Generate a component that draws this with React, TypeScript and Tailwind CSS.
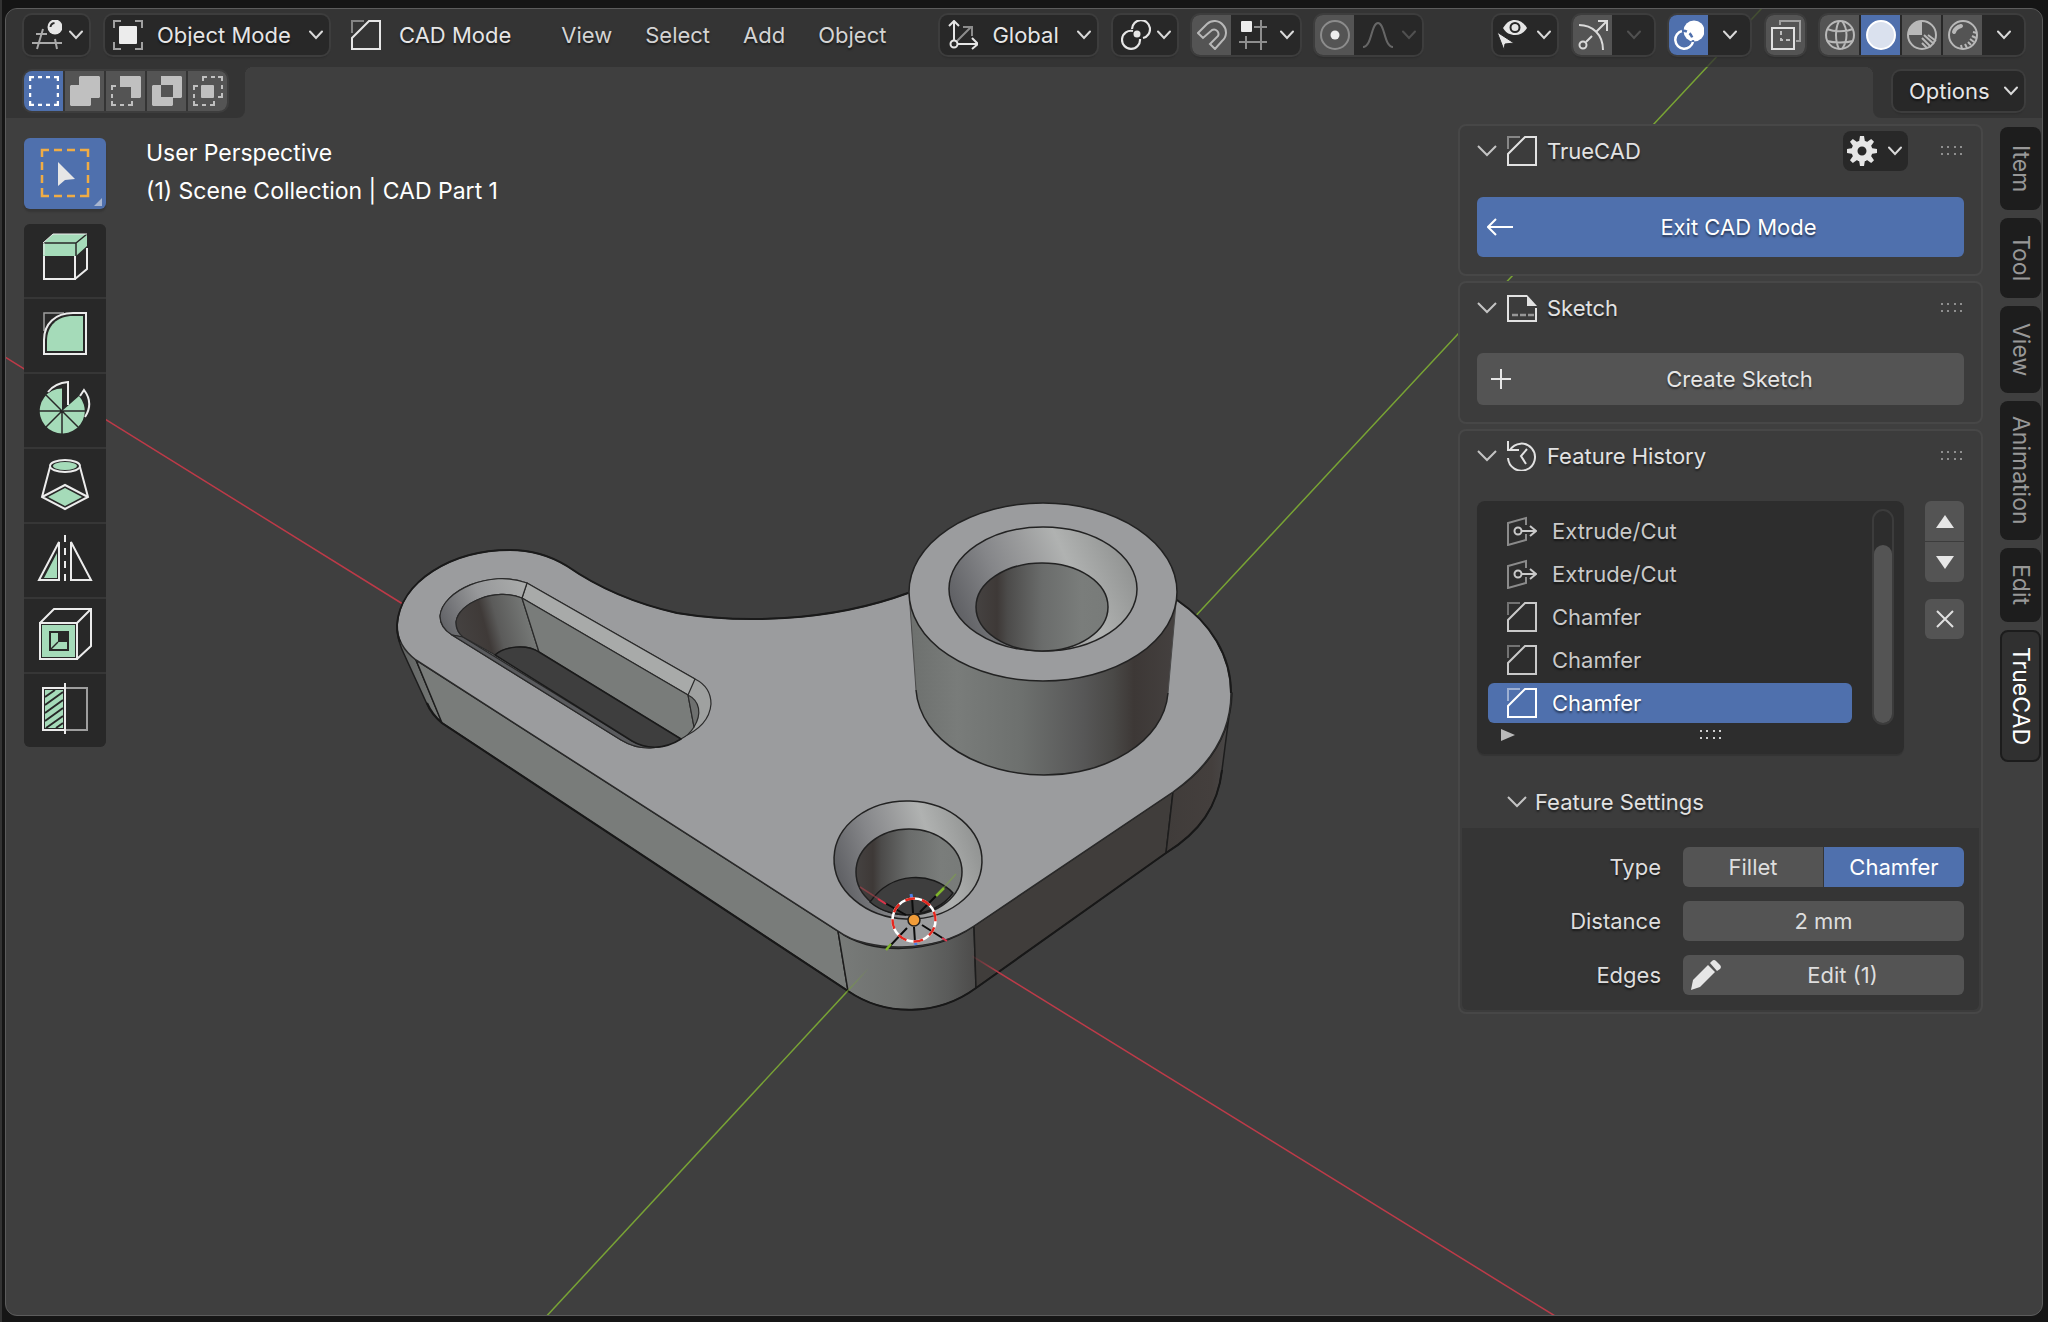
import React, { useState } from 'react';
import clsx from 'clsx';

// --- SHARED ---
const shadow = '[text-shadow:0_2px_2px_rgba(0,0,0,0.5)]';
const MINT = '#a5dbb9';

interface IconProps {
  children: React.ReactNode;
  className?: string;
  box?: number;
}

function Icon({ children, className = 'size-[30px]', box = 30 }: IconProps) {
  return (
    <svg
      viewBox={`0 0 ${box} ${box}`}
      className={clsx('shrink-0', className)}
      fill="none"
      stroke="currentColor"
      strokeWidth="2"
      aria-hidden="true"
    >
      {children}
    </svg>
  );
}

function Chevron({ className = 'text-[#d9d9d9]' }: { className?: string }) {
  return (
    <svg viewBox="0 0 14 10" className={clsx('h-[10px] w-[14px] shrink-0', className)} fill="none" stroke="currentColor" strokeWidth="2" strokeLinecap="round" aria-hidden="true">
      <path d="M1 1.5 7 8l6-6.5" />
    </svg>
  );
}

function PanelChevron() {
  return (
    <svg viewBox="0 0 20 12" className="h-3 w-5 shrink-0 text-[#c4c4c4]" fill="none" stroke="currentColor" strokeWidth="2" aria-hidden="true">
      <path d="m1 1 9 9 9-9" />
    </svg>
  );
}

function Grip({ className = 'text-[#8f8f8f]' }: { className?: string }) {
  return (
    <svg viewBox="0 0 24 10" className={clsx('h-[10px] w-6', className)} fill="currentColor" aria-hidden="true">
      {[1, 7, 14, 20].map((x) => (
        <g key={x}>
          <rect x={x} y="0" width="2" height="2" />
          <rect x={x} y="7" width="2" height="2" />
        </g>
      ))}
    </svg>
  );
}

// --- ICONS ---
function ChamferIcon() {
  return (
    <Icon>
      <path d="M1 29V18L18 1h11v28Z" />
      <path d="M1 13V1h12" opacity=".45" />
    </Icon>
  );
}

function ExtrudeIcon() {
  return (
    <Icon>
      <path d="M19 9V2L1 7v22l18-5v-6" opacity=".6" />
      <circle cx="11" cy="15" r="3.5" />
      <path d="M15 15h13M23 10l6 5-6 5" />
    </Icon>
  );
}

function EditorTypeIcon() {
  return (
    <Icon>
      <path d="M11 9 5 29M4 14h11M0 23h30M23 19l2 10" stroke="#aaa" />
      <circle cx="23" cy="7" r="7.5" fill="#e6e6e6" stroke="none" />
      <path d="M18.500 7a4.500 4.500 0 0 1 4-4" stroke="#2b2b2b" />
    </Icon>
  );
}

function ObjectModeIcon() {
  return (
    <Icon>
      <path d="M1 8V1h7M22 1h7v7M29 22v7h-7M8 29H1v-7" stroke="#a0a0a0" />
      <rect x="6" y="6" width="18" height="18" rx="1" fill="#ececec" stroke="none" />
    </Icon>
  );
}

function OrientationIcon() {
  return (
    <Icon>
      <path d="M8 22 23 7M15 7h9v9" stroke="#8c8c8c" />
      <path d="M6 20V2M1 6l5-5 5 5M9 24h20M24 18l6 6-6 5" />
      <circle cx="6" cy="24" r="3.500" />
    </Icon>
  );
}

function PivotIcon() {
  return (
    <Icon>
      <circle cx="16" cy="14" r="3.500" fill="currentColor" stroke="none" />
      <path d="M11 9a9 9 0 1 1 11 9M12 11a9 9 0 1 0 7 8" strokeWidth="2.200" />
    </Icon>
  );
}

function MagnetIcon() {
  return (
    <Icon>
      <path d="m1 13 9-9a11 11 0 0 1 16 1 11 11 0 0 1-1 16l-7 8-5-5 8-8a4.500 4.500 0 0 0-6-6l-9 8Z" />
    </Icon>
  );
}

function SnapGridIcon() {
  return (
    <Icon>
      <path d="M23 0v30M8 16v13M1 22h28M16 7h13" stroke="#8e8e8e" />
      <rect x="3" y="1" width="11" height="11" rx="1" fill="#ececec" stroke="none" />
    </Icon>
  );
}

function VisibilityIcon() {
  return (
    <Icon>
      <path d="M6 8C10 2 13 0 18 0s9 3 12 8c-3 5-7 7-12 7S9 13 6 8Z" fill="#e6e6e6" stroke="none" />
      <circle cx="18" cy="7.500" r="4.500" fill="#e6e6e6" stroke="#282828" />
      <path d="m0 12 17 11-9 1-1 6Z" fill="#e6e6e6" stroke="#282828" strokeWidth="1" />
    </Icon>
  );
}

function GizmoIcon() {
  return (
    <Icon>
      <path d="M1 5c13 0 24 9 24 25" />
      <circle cx="5" cy="25" r="3.500" />
      <path d="m8 22 6-6M18 12 29 1M20 1h9v10" />
    </Icon>
  );
}

function OverlayIcon() {
  return (
    <Icon>
      <circle cx="20" cy="11" r="10.500" fill="#fff" stroke="none" />
      <path d="M8 11a9 9 0 1 0 11 11" stroke="#fff" strokeWidth="2.500" />
      <path d="M8 11c5-1 11 3 11 11" stroke="#4f70ad" strokeWidth="2.500" strokeDasharray="5 3" />
    </Icon>
  );
}

function XrayIcon() {
  return (
    <Icon>
      <path d="M9 5V1h20v20h-4" stroke="#9f9f9f" />
      <path d="M1 8h22v21H1Z" />
      <path d="M10 11v9h9" stroke="#bdbdbd" strokeDasharray="4 3" />
    </Icon>
  );
}

function WireIcon() {
  return (
    <Icon>
      <circle cx="15" cy="15" r="14" />
      <path d="M2 9c7 3 19 3 26 0M2 21c7 2 19 2 26 0M14 1c-4 8-4 20 0 28M17 1c6 8 6 20 0 28" />
    </Icon>
  );
}

function SolidIcon() {
  return (
    <Icon>
      <circle cx="15" cy="15" r="14" fill="#dae1ee" stroke="#fff" />
    </Icon>
  );
}

function MaterialIcon() {
  return (
    <Icon>
      <path d="M15 15V1A14 14 0 0 0 1 15Z" fill="currentColor" stroke="none" />
      <circle cx="15" cy="15" r="14" />
      <path d="m15 18 9 9M17 15l10 9M21 15l8 6M15 23l5 5" strokeWidth="2" />
    </Icon>
  );
}

function RenderedIcon() {
  return (
    <Icon>
      <circle cx="15" cy="15" r="14" />
      <path d="M6 12c1-3 3-5 7-6" strokeWidth="4" strokeLinecap="round" />
      <path d="m13 25 1 4M17 24l2 4M20 22l3 3M22 19l4 3M24 16l4 2M25 12l4 1" />
    </Icon>
  );
}

function GearIcon() {
  return (
    <Icon>
      <circle cx="15" cy="15" r="7.500" stroke="#e6e6e6" strokeWidth="6" />
      {[0, 45, 90, 135, 180, 225, 270, 315].map((a) => (
        <path key={a} d="M12 6 13 0h4l1 6Z" fill="#e6e6e6" stroke="none" transform={`rotate(${a} 15 15)`} />
      ))}
    </Icon>
  );
}

function SketchIcon() {
  return (
    <Icon>
      <path d="M20 3H1v25h28V15" />
      <path d="M20 2v11h10Z" fill="currentColor" stroke="none" />
      <path d="M5 22h22" strokeDasharray="6 2" opacity=".55" strokeWidth="2.500" />
    </Icon>
  );
}

function HistoryIcon() {
  return (
    <Icon>
      <path d="M1 0v9h11M3 9a13.500 13.500 0 1 1-2 8M20 8l-6 7 5 8" />
    </Icon>
  );
}

function PencilIcon() {
  return (
    <Icon>
      <path d="m0 30 2-10L17 5l7 7L9 27Z" fill="#e6e6e6" stroke="none" />
      <path d="m19 3 2-2a3 3 0 0 1 4 0l4 4a3 3 0 0 1 0 4l-3 2Z" fill="#e6e6e6" stroke="none" />
    </Icon>
  );
}

// --- HEADER CONTROLS ---
const boxed = 'flex h-10 items-center rounded-lg bg-[#282828] ring-2 ring-[#3d3d3d] shadow-[0_3px_2px_rgba(0,0,0,0.15)]';

interface DropdownProps {
  label: string;
  icon: React.ReactNode;
  value: string;
  className: string;
}

function Dropdown({ label, icon, value, className }: DropdownProps) {
  return (
    <label className={clsx(boxed, 'text-[#e6e6e6]', className)}>
      {icon}
      <select aria-label={label} defaultValue={value} className={clsx('h-full min-w-0 grow appearance-none bg-transparent outline-none', shadow)}>
        <option>{value}</option>
      </select>
      <Chevron />
    </label>
  );
}

function Segment({ label, active, children }: { label: string; active?: boolean; children: React.ReactNode }) {
  return (
    <button
      aria-label={label}
      aria-pressed={!!active}
      className={clsx('flex h-10 w-[39px] items-center justify-center', active ? 'bg-[#4f70ad] text-white' : 'bg-[#545454] text-[#b8b8b8]')}
    >
      {children}
    </button>
  );
}

function Header() {
  const menus = ['View', 'Select', 'Add', 'Object'];
  return (
    <header className="flex h-[58px] items-start justify-between bg-[#323232]/75 px-[18px] pt-1.5">
      <div className="flex h-10 items-center">
        <button aria-label="Editor type" className={clsx(boxed, 'w-[65px] justify-between pr-1.5 pl-2')}>
          <EditorTypeIcon />
          <Chevron />
        </button>
        <Dropdown label="Mode" value="Object Mode" icon={<ObjectModeIcon />} className="ml-4 w-[224px] gap-[14px] pr-1.5 pl-2" />
        <button className={clsx('ml-[22px] flex items-center gap-[18px] text-[#e6e6e6]', shadow)}>
          <ChamferIcon />
          CAD Mode
        </button>
        <nav className="ml-[50px] flex gap-[33px] text-[#d4d4d4]">
          {menus.map((m) => (
            <button key={m} className={shadow}>{m}</button>
          ))}
        </nav>
        <Dropdown label="Transform orientation" value="Global" icon={<OrientationIcon />} className="ml-[54px] w-[157px] gap-[14px] pr-1.5 pl-2 text-[#e6e6e6]" />
        <button aria-label="Pivot point" className={clsx(boxed, 'ml-4 w-[64px] justify-between pr-1.5 pl-2 text-[#e6e6e6]')}>
          <PivotIcon />
          <Chevron />
        </button>
        <div className={clsx(boxed, 'ml-[15px] gap-0.5 overflow-hidden')}>
          <Segment label="Snap"><MagnetIcon /></Segment>
          <button aria-label="Snapping" className="flex w-[67px] items-center justify-between pr-1.5 pl-[5px]">
            <SnapGridIcon />
            <Chevron />
          </button>
        </div>
        <div className={clsx(boxed, 'ml-[15px] gap-px overflow-hidden bg-[#2f2f2f]')}>
          <Segment label="Proportional editing">
            <Icon>
              <circle cx="15" cy="15" r="14" stroke="#8c8c8c" />
              <circle cx="15" cy="15" r="4.500" fill="#ececec" stroke="none" />
            </Icon>
          </Segment>
          <button aria-label="Proportional falloff" className="flex w-[67px] items-center justify-between pr-1.5 pl-2">
            <Icon className="size-[30px] text-[#666]">
              <path d="M0 27c9 0 8-24 15-24s6 24 15 24" />
            </Icon>
            <Chevron className="text-[#505050]" />
          </button>
        </div>
      </div>

      <div className="flex h-10 items-center">
        <button aria-label="Visibility" className={clsx(boxed, 'w-[64px] justify-between pr-1.5 pl-1')}>
          <VisibilityIcon />
          <Chevron />
        </button>
        <div className={clsx(boxed, 'ml-4 gap-0.5 overflow-hidden bg-[#2f2f2f]')}>
          <Segment label="Gizmos"><span className="text-[#dadada]"><GizmoIcon /></span></Segment>
          <button aria-label="Gizmo options" className="flex h-10 w-10 items-center justify-center"><Chevron className="text-[#505050]" /></button>
        </div>
        <div className={clsx(boxed, 'ml-[15px] gap-0.5 overflow-hidden')}>
          <Segment label="Overlays" active><OverlayIcon /></Segment>
          <button aria-label="Overlay options" className="flex h-10 w-10 items-center justify-center"><Chevron /></button>
        </div>
        <div className={clsx(boxed, 'ml-4 overflow-hidden')}>
          <Segment label="X-ray"><span className="text-[#e0e0e0]"><XrayIcon /></span></Segment>
        </div>
        <div className={clsx(boxed, 'ml-[15px] gap-0.5 overflow-hidden')}>
          <Segment label="Wireframe"><WireIcon /></Segment>
          <Segment label="Solid" active><SolidIcon /></Segment>
          <Segment label="Material preview"><MaterialIcon /></Segment>
          <Segment label="Rendered"><RenderedIcon /></Segment>
          <button aria-label="Shading options" className="flex h-10 w-10 items-center justify-center"><Chevron /></button>
        </div>
      </div>
    </header>
  );
}

function ToolSettings() {
  return (
    <div className="flex h-[51px] items-start justify-between">
      <div className="flex">
        <div className="h-[51px] rounded-br-lg bg-[#323232]/75 pt-1 pr-[18px] pl-[18px]">
          <div className="flex gap-0.5 overflow-hidden rounded-lg ring-2 ring-[#3d3d3d]">
            <Segment label="Set selection" active>
              <Icon><path d="M1 5V1h4M9 1h4M17 1h4M25 1h4v4M29 9v4M29 17v4M29 25v4h-4M21 29h-4M13 29H9M5 29H1v-4M1 21v-4M1 13V9" strokeWidth="2.500" /></Icon>
            </Segment>
            <Segment label="Extend selection">
              <Icon><path d="M10 0h19l1 1v20l-1 1h-8v7l-1 1H1l-1-1V10l1-1h8V1Z" fill="#c0c0c0" stroke="none" /></Icon>
            </Segment>
            <Segment label="Subtract selection">
              <Icon>
                <path d="M9 0h20l1 1v20l-1 1h-9V11H9Z" fill="#c0c0c0" stroke="none" />
                <path d="M5 10H1v4M1 18v4M1 25v4h4M9 29h4M17 29h4v-4" stroke="#c0c0c0" />
              </Icon>
            </Segment>
            <Segment label="Invert selection">
              <Icon><path d="M9 0h20l1 1v20l-1 1h-8v7l-1 1H1l-1-1V10l1-1h8Zm0 9v12h12V9Z" fill="#c0c0c0" stroke="none" fillRule="evenodd" /></Icon>
            </Segment>
            <Segment label="Intersect selection">
              <Icon>
                <rect x="8" y="9" width="13" height="13" rx="1" fill="#c0c0c0" stroke="none" />
                <path d="M10 5V1h4M18 1h4M25 1h4v4M29 9v4M29 17v4h-4M5 10H1v4M1 18v4M1 25v4h4M9 29h4M17 29h4v-4" stroke="#c0c0c0" />
              </Icon>
            </Segment>
          </div>
        </div>
        <div className="size-2 bg-[radial-gradient(circle_at_bottom_right,transparent_8px,#353535_8px)]" />
      </div>
      <div className="flex">
        <div className="size-2 bg-[radial-gradient(circle_at_bottom_left,transparent_8px,#353535_8px)]" />
        <div className="h-[51px] rounded-bl-lg bg-[#323232]/75 pt-1 pr-[18px] pl-5">
          <button className={clsx(boxed, 'w-[131px] justify-between pr-1.5 pl-4 text-[#e6e6e6]', shadow)}>
            Options
            <Chevron />
          </button>
        </div>
      </div>
    </div>
  );
}

// --- TOOLBAR ---
const tools = [
  {
    name: 'Extrude',
    art: (
      <>
        <path d="M7 22v26h31V22M38 48l12-10V17" />
        <path d="M6 12 16 3h34v12L39 25H6Z" fill={MINT} stroke="none" />
        <path d="M6 12h33v13M39 12 50 3" stroke="#282828" strokeWidth="1.500" />
        <path d="M6 12 16 3h34M7 12v12" strokeWidth="1" />
      </>
    ),
  },
  {
    name: 'Fillet',
    art: (
      <>
        <path d="M7 25V7h20" opacity=".6" strokeWidth="1.500" />
        <path d="M7 48V34C7 18 18 7 36 7h13v41Z" />
        <path d="M10 45V35c0-15 10-25 26-25h10v35Z" fill={MINT} stroke="none" />
      </>
    ),
  },
  {
    name: 'Revolve',
    art: (
      <>
        <path d="M11 11Q18 2 31 1v23M43 15l4-6q10 13 1 27" />
        <path d="M25 30V7.500A22.500 22.500 0 1 0 42 15Z" fill={MINT} stroke="none" />
        <path d="M25 30v23M2 30h46M25 30 9 14M25 30 9 46M25 30l16 16" stroke="#282828" strokeWidth="1.500" />
      </>
    ),
  },
  {
    name: 'Loft',
    art: (
      <>
        <ellipse cx="28" cy="10" rx="15" ry="6" />
        <ellipse cx="28" cy="10" rx="12" ry="4" fill={MINT} stroke="none" />
        <path d="M13 11 5 41l23 12 23-12-8-30M5 41l23-12 23 12" />
        <path d="m11 41 17-9 17 9-17 9Z" fill={MINT} stroke="none" />
      </>
    ),
  },
  {
    name: 'Mirror',
    art: (
      <>
        <path d="M22 11v38H2ZM34 11v38h20Z" />
        <path d="M20 22v25H7Z" fill={MINT} stroke="none" />
        <path d="M28 4v48" strokeDasharray="7 6" />
      </>
    ),
  },
  {
    name: 'Shell',
    art: (
      <>
        <path d="M3 17h37v36H3Zm0 0L17 3h37v37L40 53M40 17 54 3" />
        <path d="M5 19h33v32H5Zm7 6v20h20V25Z" fill={MINT} stroke="none" fillRule="evenodd" />
        <path d="M14 27h7v9h9v7H14Z" fill={MINT} stroke="none" />
        <path d="m13 44 8-8" stroke="#282828" strokeWidth="1.500" />
      </>
    ),
  },
  {
    name: 'Section',
    art: (
      <>
        <path d="M28 7h22v42H28" opacity=".6" />
        <path d="M6 7h22v42H6Z" />
        <path d="M8 9h18v38H8Z" fill={MINT} stroke="none" />
        <path d="M8 16 18 9M8 24l18-13M8 32l18-13M8 40l18-13M9 47l17-12M19 47l7-5" stroke="#282828" />
        <path d="M28 2v51" />
      </>
    ),
  },
];

function Toolbar() {
  return (
    <aside className="mt-5 ml-[18px] flex w-[82px] flex-col gap-[15px]">
      <button aria-label="Select box" aria-pressed="true" className="flex h-[71px] items-center justify-center rounded-md bg-[#4f70ad] shadow-[0_3px_2px_rgba(0,0,0,0.15)]">
        <svg viewBox="0 0 82 71" className="h-[71px] w-[82px]" fill="none" aria-hidden="true">
          <path d="M18 19v-7h7M30 12h8M43 12h8M56 12h8v7M64 24v8M64 37v8M64 50v8h-8M51 58h-8M38 58h-8M25 58h-7v-8M18 45v-8M18 32v-8" stroke="#f0ac45" strokeWidth="2.500" />
          <path d="m34 24 17 17-10 1-7 6Z" fill="#e6e6e6" />
          <path d="M78 60v8h-8Z" fill="#a9b6d0" />
        </svg>
      </button>
      <div className="flex flex-col gap-0.5 overflow-hidden rounded-md bg-[#363636]">
        {tools.map((t) => (
          <button key={t.name} aria-label={t.name} className="flex h-[73px] items-center justify-center bg-[#282828] pb-1 text-[#ececec]">
            <Icon className="size-14" box={56}>{t.art}</Icon>
          </button>
        ))}
      </div>
    </aside>
  );
}

// --- SIDE PANELS ---
interface PanelProps {
  title: string;
  icon: React.ReactNode;
  action?: React.ReactNode;
  children: React.ReactNode;
}

function Panel({ title, icon, action, children }: PanelProps) {
  return (
    <section className="rounded-lg border-2 border-[#474747] bg-[#3c3c3c]">
      <div className="flex h-[50px] items-center px-[17px] text-[#e2e2e2]">
        <button className={clsx('flex grow items-center gap-[10px]', shadow)}>
          <PanelChevron />
          {icon}
          {title}
        </button>
        {action}
        <Grip />
      </div>
      {children}
    </section>
  );
}

const features = [
  { id: 1, name: 'Extrude/Cut' },
  { id: 2, name: 'Extrude/Cut' },
  { id: 3, name: 'Chamfer' },
  { id: 4, name: 'Chamfer' },
  { id: 5, name: 'Chamfer' },
];

function FeatureList() {
  const [selected, setSelected] = useState(5);
  const square = 'flex h-10 w-[39px] items-center justify-center bg-[#545454]';
  return (
    <div className="mt-5 flex items-start justify-between px-[17px]">
      <div className="w-[427px] rounded-lg bg-[#2d2d2d] shadow-[0_2px_1px_rgba(0,0,0,0.15)]">
        <div className="flex justify-between pt-2 pr-2.5 pl-[11px]">
          <ul className="w-[364px] space-y-[3px] pt-0.5">
            {features.map((f) => (
              <li key={f.id}>
                <button
                  onClick={() => setSelected(f.id)}
                  className={clsx('flex h-10 w-full items-center gap-[15px] rounded-md pl-[19px]', shadow, f.id === selected ? 'bg-[#4f70ad] text-white' : 'text-[#c9c9c9]')}
                >
                  {f.name === 'Chamfer' ? <ChamferIcon /> : <ExtrudeIcon />}
                  {f.name}
                </button>
              </li>
            ))}
          </ul>
          <div className="flex h-[216px] w-[22px] items-end rounded-full border-2 border-[#3c3c3c]">
            <div className="h-[178px] w-full rounded-full bg-[#545454]" />
          </div>
        </div>
        <div className="grid h-[29px] grid-cols-3 items-start pt-1 pl-6">
          <button aria-label="Show filters">
            <svg viewBox="0 0 14 12" className="h-3 w-[14px]" fill="#b9b9b9" aria-hidden="true"><path d="M0 0v12l14-6Z" /></svg>
          </button>
          <div className="flex justify-center pt-px pl-[18px]"><Grip className="text-[#d0d0d0]" /></div>
        </div>
      </div>
      <div className="flex flex-col">
        <button aria-label="Move up" className={clsx(square, 'rounded-t-md')}>
          <svg viewBox="0 0 18 13" className="h-[13px] w-[18px]" fill="#e6e6e6" aria-hidden="true"><path d="M9 0l9 13H0Z" /></svg>
        </button>
        <button aria-label="Move down" className={clsx(square, 'mt-px rounded-b-md')}>
          <svg viewBox="0 0 18 13" className="h-[13px] w-[18px]" fill="#e6e6e6" aria-hidden="true"><path d="M9 13 18 0H0Z" /></svg>
        </button>
        <button aria-label="Remove feature" className={clsx(square, 'mt-[17px] rounded-md')}>
          <svg viewBox="0 0 18 18" className="size-[18px]" fill="none" stroke="#e0e0e0" strokeWidth="2" aria-hidden="true"><path d="m1 1 16 16M17 1 1 17" /></svg>
        </button>
      </div>
    </div>
  );
}

function FeatureSettings() {
  const [type, setType] = useState('Chamfer');
  const row = 'flex items-center gap-[22px]';
  const label = 'grow text-right';
  return (
    <>
      <div className="mt-[22px] flex h-[52px] items-center pl-[47px] text-[#e2e2e2]">
        <button className={clsx('flex items-center gap-2', shadow)}>
          <PanelChevron />
          Feature Settings
        </button>
      </div>
      <div className={clsx('m-0.5 mt-0 space-y-[14px] rounded-b-md bg-[#353535] px-[15px] pt-[19px] pb-[15px] text-[#dedede]', shadow)}>
        <div className={row} role="group" aria-labelledby="type-label">
          <span id="type-label" className={label}>Type</span>
          <div className="flex w-[281px] gap-px overflow-hidden rounded-md">
            {['Fillet', 'Chamfer'].map((t) => (
              <button
                key={t}
                aria-pressed={t === type}
                onClick={() => setType(t)}
                className={clsx('h-10 flex-1', t === type ? 'bg-[#4f70ad] text-white' : 'bg-[#545454]')}
              >
                {t}
              </button>
            ))}
          </div>
        </div>
        <div className={row}>
          <label htmlFor="distance" className={label}>Distance</label>
          <input id="distance" defaultValue="2 mm" className="h-10 w-[281px] rounded-md bg-[#545454] text-center outline-none" />
        </div>
        <div className={row}>
          <label htmlFor="edges" className={label}>Edges</label>
          <button id="edges" className="flex h-10 w-[281px] items-center rounded-md bg-[#545454] pl-2">
            <PencilIcon />
            <span className="grow">Edit (1)</span>
          </button>
        </div>
      </div>
    </>
  );
}

function SidePanels() {
  return (
    <div className="mt-1.5 flex w-[525px] flex-col gap-[5px]">
      <Panel
        title="TrueCAD"
        icon={<ChamferIcon />}
        action={
          <button aria-label="Settings" className="mr-8 flex h-10 w-[65px] items-center justify-between rounded-lg bg-[#282828] pr-1.5 pl-1">
            <GearIcon />
            <Chevron />
          </button>
        }
      >
        <div className="px-[17px] pt-[21px] pb-[17px]">
          <button className={clsx('flex h-[60px] w-full items-center rounded-md bg-[#4f70ad] pl-[10px] text-white', shadow)}>
            <svg viewBox="0 0 26 18" className="h-[18px] w-[26px]" fill="none" stroke="currentColor" strokeWidth="2" aria-hidden="true"><path d="M26 9H1M9 1 1 9l8 8" /></svg>
            <span className="grow">Exit CAD Mode</span>
          </button>
        </div>
      </Panel>
      <Panel title="Sketch" icon={<SketchIcon />}>
        <div className="px-[17px] pt-5 pb-[17px]">
          <button className={clsx('flex h-[52px] w-full items-center rounded-md bg-[#545454] pl-[14px] text-[#e6e6e6]', shadow)}>
            <svg viewBox="0 0 20 20" className="size-5" fill="none" stroke="currentColor" strokeWidth="2" aria-hidden="true"><path d="M0 10h20M10 0v20" /></svg>
            <span className="grow pl-1">Create Sketch</span>
          </button>
        </div>
      </Panel>
      <Panel title="Feature History" icon={<HistoryIcon />}>
        <FeatureList />
        <FeatureSettings />
      </Panel>
    </div>
  );
}

function SideTabs() {
  const tabs = [
    { name: 'Item', height: 'h-[83px]' },
    { name: 'Tool', height: 'h-[80px]' },
    { name: 'View', height: 'h-[87px]' },
    { name: 'Animation', height: 'h-[139px]' },
    { name: 'Edit', height: 'h-[74px]' },
    { name: 'TrueCAD', height: 'h-[132px]' },
  ];
  return (
    <nav className="mt-[9px] mr-px ml-[17px] flex w-[41px] flex-col gap-2">
      {tabs.map((t) => (
        <button
          key={t.name}
          className={clsx(
            'flex items-center justify-center rounded-lg text-[23px] [writing-mode:vertical-rl]',
            t.height,
            t.name === 'TrueCAD' ? 'border-2 border-[#1c1c1c] bg-[#303030] text-white' : 'bg-[#1d1d1d] text-[#989898]',
          )}
        >
          {t.name}
        </button>
      ))}
    </nav>
  );
}

// --- 3D SCENE ---
function Scene() {
  return (
    <svg viewBox="6 9 2036 1306" preserveAspectRatio="xMidYMid slice" className="absolute inset-0 size-full" fill="none" aria-hidden="true">
      <defs>
        <linearGradient id="front" x1="838" x2="976" y1="0" y2="0" gradientUnits="userSpaceOnUse">
          <stop offset="0" stopColor="#787b79" />
          <stop offset=".45" stopColor="#6e706e" />
          <stop offset=".8" stopColor="#5a5b5a" />
          <stop offset="1" stopColor="#4c4b4a" />
        </linearGradient>
        <linearGradient id="rightEnd" x1="1166" x2="1231" y1="0" y2="0" gradientUnits="userSpaceOnUse">
          <stop offset="0" stopColor="#403c3a" />
          <stop offset=".7" stopColor="#443f3d" />
          <stop offset="1" stopColor="#4a4949" />
        </linearGradient>
        <linearGradient id="leftEnd" x1="400" x2="440" y1="0" y2="0" gradientUnits="userSpaceOnUse">
          <stop offset="0" stopColor="#5f6160" />
          <stop offset="1" stopColor="#787b79" />
        </linearGradient>
        <linearGradient id="boss" x1="909" x2="1177" y1="0" y2="0" gradientUnits="userSpaceOnUse">
          <stop offset="0" stopColor="#6d706e" />
          <stop offset=".18" stopColor="#797c7a" />
          <stop offset=".42" stopColor="#6d706e" />
          <stop offset=".65" stopColor="#575757" />
          <stop offset=".76" stopColor="#4a4947" />
          <stop offset=".84" stopColor="#3d3836" />
          <stop offset="1" stopColor="#454140" />
        </linearGradient>
        <linearGradient id="cone" x1="0" x2="1" y1=".65" y2=".35">
          <stop offset="0" stopColor="#5c5d61" />
          <stop offset=".3" stopColor="#858689" />
          <stop offset=".5" stopColor="#9b9c9d" />
          <stop offset=".68" stopColor="#b0b2b1" />
          <stop offset="1" stopColor="#909291" />
        </linearGradient>
        <linearGradient id="bore" x1="0" x2="1" y1="0" y2="0">
          <stop offset="0" stopColor="#454241" />
          <stop offset=".16" stopColor="#3e3937" />
          <stop offset=".24" stopColor="#4c4b4a" />
          <stop offset=".5" stopColor="#6a6c6b" />
          <stop offset=".8" stopColor="#7a7d7b" />
          <stop offset="1" stopColor="#787b79" />
        </linearGradient>
        <linearGradient id="slotCone" x1="440" x2="527" y1="625" y2="583" gradientUnits="userSpaceOnUse">
          <stop offset="0" stopColor="#606165" />
          <stop offset=".5" stopColor="#97989a" />
          <stop offset="1" stopColor="#abadac" />
        </linearGradient>
        <linearGradient id="slotBore" x1="456" x2="530" y1="630" y2="610" gradientUnits="userSpaceOnUse">
          <stop offset="0" stopColor="#454241" />
          <stop offset=".38" stopColor="#3f3a38" />
          <stop offset=".55" stopColor="#5b5b5a" />
          <stop offset="1" stopColor="#787b79" />
        </linearGradient>
        <linearGradient id="redFade" x1="970" x2="1000" y1="0" y2="0" gradientUnits="userSpaceOnUse">
          <stop offset="0" stopColor="#bd3a48" stopOpacity="0" />
          <stop offset="1" stopColor="#bd3a48" />
        </linearGradient>
        <linearGradient id="greenFade" x1="846" x2="870" y1="0" y2="0" gradientUnits="userSpaceOnUse">
          <stop offset="0" stopColor="#78a334" />
          <stop offset=".1" stopColor="#78a334" stopOpacity=".5" />
          <stop offset="1" stopColor="#78a334" stopOpacity="0" />
        </linearGradient>
      </defs>

      {/* Axes behind the part */}
      <path d="M5 357 406 606" stroke="#bd3a48" strokeWidth="1.500" />
      <path d="M1763 7 1458 334 1190 622" stroke="#78a334" strokeWidth="1.500" />

      {/* Side walls */}
      <g stroke="#1d1d1d" strokeWidth="1.500" strokeLinejoin="round">
        <path d="M397 630c1 8 3 16 7 24l22 48c4 10 9 16 16 20l-26-62Z" fill="url(#leftEnd)" />
        <path d="M416 660 838 931l10 60L442 723Z" fill="#797c7a" />
        <path d="M838 931c30 24 96 24 136-5l2 62c-38 28-90 29-128 3Z" fill="url(#front)" />
        <path d="m974 926 199-134-7 61L976 988Z" fill="#403d3b" />
        <path d="M1173 792c38-26 58-60 59-99l-10 77c-4 36-22 62-56 83Z" fill="url(#rightEnd)" />
      </g>
      <path d="M427 703c4 9 9 15 15 20l406 268c38 26 90 25 128-3l190-135c34-21 52-47 56-83" stroke="#181818" strokeWidth="2" />

      {/* Top face */}
      <path
        d="M416 660c-12-9-19-20-19-35 3-44 55-75 113-75 21 0 39 5 57 16 33 23 70 38 110 47 60 10 150 10 231-20L1177 600c34 23 54 56 54 93 0 40-20 72-58 99L974 926c-40 27-106 27-136 5Z"
        fill="#9b9c9e"
        stroke="#2a2a2a"
        strokeWidth="1.500"
      />
      <path d="M400 642c-3-7-3-12-3-17 3-44 55-75 113-75 21 0 39 5 57 16 33 23 70 38 110 47 60 10 150 10 231-20M1177 600c34 23 54 56 54 93" stroke="#1a1a1a" strokeWidth="2" />

      {/* Slot */}
      <g stroke="#2a2a2a" strokeWidth="1.200" strokeLinejoin="round">
        <path d="m527 583 168 96c10 5 16 14 16 25-1 14-11 26-30 34-20 13-42 13-60 2L452 635c-8-5-12-11-12-19 2-25 50-47 87-33Z" fill="#9fa1a0" />
        <path d="m527 583 168 96-7 16-166-97Z" fill="#a8aaa9" />
        <path d="M527 583c-37-14-85 8-87 33 0 8 4 14 12 19l11 2c-5-4-7-9-7-15 2-19 40-35 66-24Z" fill="url(#slotCone)" />
        <path d="m452 635 169 105c18 11 40 11 60-2-17 10-36 10-49 3L463 637Z" fill="#5a5b5e" />
        <path d="M522 598c-26-11-64 5-66 24 0 6 2 11 7 15l32 18c10-9 32-11 44-3Z" fill="url(#slotBore)" />
        <path d="m522 598 166 97 6 32c-3 5-7 9-13 12L539 652Z" fill="#797c7a" />
        <path d="M688 695c12 6 14 19 6 32Z" fill="#6e706f" />
        <path d="M495 655c10-9 32-11 44-3l142 87c-17 11-36 10-49 2Z" fill="#3e3e3e" stroke="#1a1a1a" strokeWidth="1.500" />
      </g>

      {/* Boss */}
      <path d="M909 592 916 690c4 52 66 85 128 85s120-33 124-82l9-101Z" fill="url(#boss)" />
      <path d="M916 690c4 52 66 85 128 85s120-33 124-82" stroke="#222" strokeWidth="1.500" />
      <path d="m909 592 7 98M1177 592l-9 101" stroke="#4a4a4a" strokeWidth="1" />
      <g stroke="#222" strokeWidth="1.500">
        <ellipse cx="1043" cy="592" rx="134" ry="89" fill="#9b9c9e" />
        <ellipse cx="1043" cy="589" rx="94" ry="62" fill="url(#cone)" />
        <ellipse cx="1042" cy="607" rx="66" ry="44" fill="url(#bore)" />
      </g>

      {/* Counter-sunk hole */}
      <g stroke="#222" strokeWidth="1.500">
        <ellipse cx="908" cy="860" rx="74" ry="59" fill="url(#cone)" transform="rotate(2 908 860)" />
        <ellipse cx="909" cy="872" rx="53" ry="43" fill="url(#bore)" />
        <path d="M870 902c22-31 62-31 83-9-18 25-60 29-83 9Z" fill="#3e3e3e" stroke="#1a1a1a" />
      </g>

      {/* Axes in front of the part */}
      <path d="m972 956 588 363" stroke="url(#redFade)" strokeWidth="1.500" />
      <path d="M868 969 543 1320" stroke="url(#greenFade)" strokeWidth="1.500" />

      {/* 3D cursor and origin */}
      <path d="m860 887 25 16" stroke="#d24553" strokeWidth="1.500" opacity=".45" />
      <path d="m936 896 20-22" stroke="#7fae38" strokeWidth="1.500" opacity=".45" />
      <g strokeWidth="2">
        <path d="m912 897 1 16M914 927l1 15M885 903l21 12M922 925l22 14M937 895l-17 17M907 928l-19 20" stroke="#0c0c0c" />
        <path d="m911 894 1 5M915 940l1 5" stroke="#4a80e8" strokeWidth="3" />
        <path d="m878 899 8 5M942 938l5 3" stroke="#d9344a" />
        <path d="m936 896 8-8M891 944l-5 6" stroke="#80b52c" strokeWidth="2.500" />
        <circle cx="914" cy="920" r="21.500" stroke="#fff" strokeWidth="2.500" />
        <circle cx="914" cy="920" r="21.500" stroke="#e3281f" strokeWidth="2.500" strokeDasharray="9.650 7.240" transform="rotate(20 914 920)" />
      </g>
      <circle cx="914" cy="920" r="6" fill="#f19c38" stroke="#26211c" strokeWidth="1.500" />
    </svg>
  );
}

export default function App() {
  return (
    <div className="flex h-screen border-l-2 border-[#333] bg-[#151515] pt-2 pr-[5px] pb-1.5 pl-[3px] font-['Inter',sans-serif] text-[22px] leading-none">
      <main className="relative min-w-0 grow overflow-hidden rounded-xl border border-[#5c5c5c] bg-[#3f3f3f]">
        <Scene />
        <div className="relative flex flex-col">
          <Header />
          <ToolSettings />
          <div className="flex items-start">
            <Toolbar />
            <div className="mt-4 ml-10 grow text-[23px] leading-[38px] text-white">
              <p>User Perspective</p>
              <p>(1) Scene Collection | CAD Part 1</p>
            </div>
            <SidePanels />
            <SideTabs />
          </div>
        </div>
      </main>
    </div>
  );
}
